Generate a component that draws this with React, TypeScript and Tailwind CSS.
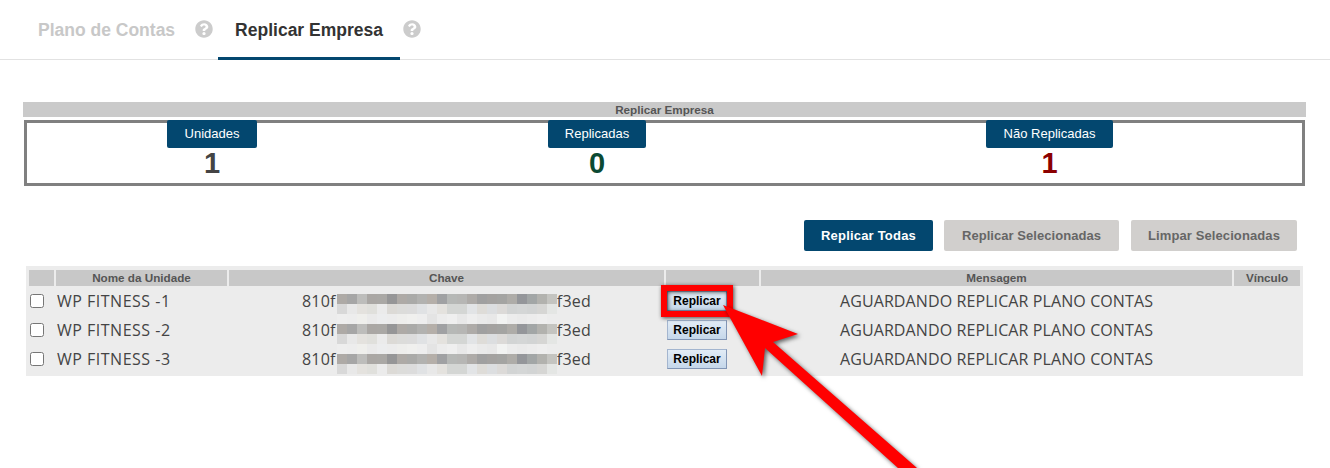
import { FaQuestionCircle } from 'react-icons/fa';

const dark = ['#aeaaa6', '#a6a6a6', '#bdbdbb', '#aaa7a4', '#aaa8a5', '#969697', '#aeaaa6', '#aaaaa8', '#b2b2b0', '#b5afa9', '#a0a1a3', '#b6b8b6', '#b6b6b4', '#aeaba8', '#a0a0a0', '#a4a2a0', '#a4a4a2', '#aeaca8', '#94969a', '#a2a6a6', '#b2b2ae', '#c4c4c0'];
const mid = ['#d8d8d8', '#e8e8e8', '#e4e2de', '#e0e0dc', '#ebebeb', '#dcdad6', '#dcdcda', '#dcdcdc', '#e0e2e4', '#e8e8e8', '#e4e2de', '#d4d6d4', '#d4d6d4', '#e2e4e6', '#dedcd8', '#dcdee0', '#dcdad8', '#d2d4d4', '#d4d6d6', '#d2d4d4', '#d6d6d4', '#e4e6e4'];
const pale = ['#eeeeee', '#ededed', '#efefec', '#eaeaea', '#ecedee', '#ececec', '#eeeeec', '#f0f0ee', '#eeeeee', '#e4e4e4', '#ececec', '#efefef', '#e8e8e8', '#eeeeee', '#eaeaea', '#e8e8e8', '#f2f3f2', '#ececec', '#eaeaea', '#ececec', '#eeeeee', '#ececec'];
const mosaic = [dark, mid, pale, dark, mid, pale, dark, mid];

const stats = [
  { label: 'Unidades', value: '1', color: 'text-[#444444]' },
  { label: 'Replicadas', value: '0', color: 'text-[#0b4a33]' },
  { label: 'Não Replicadas', value: '1', color: 'text-[#8b0000]' },
];

const rows = ['WP FITNESS -1', 'WP FITNESS -2', 'WP FITNESS -3'];
const cols = 'grid grid-cols-[25px_171px_435px_93px_471px_66px] gap-x-[2px]';

export default function App() {
  return (
    <div className="relative h-[468px] w-[1330px] overflow-hidden bg-white font-['Liberation_Sans',Arial,sans-serif]">
      <div className="flex h-[60px] border-b border-[#e2e2e2] pl-[21px]">
        <div className="flex h-[60px] items-center px-[17px] text-[17.5px] font-bold text-[#c8c8c8]">Plano de Contas</div>
        <FaQuestionCircle size={18} className="ml-[3px] mr-[5px] mt-[20px] text-[#cccccc]" />
        <div className="flex h-[60px] items-center border-b-[3px] border-[#03476f] px-[17px] pt-[3px] text-[17.5px] font-bold text-[#333333]">Replicar Empresa</div>
        <FaQuestionCircle size={18} className="ml-[3px] mt-[20px] text-[#cccccc]" />
      </div>

      <div className="ml-[23px] mt-[42px] w-[1283px]">
        <div className="h-[15px] bg-[#cacaca] text-center text-[11.7px] font-bold leading-[16px] text-[#555555]">Replicar Empresa</div>
        <div className="ml-px mt-[3px] grid h-[66px] w-[1281px] grid-cols-[370px_400px_1fr] border-[3px] border-[#808080]">
          {stats.map((s) => (
            <div key={s.label} className="-mt-[3px] flex flex-col items-center">
              <div className="flex h-[28px] items-center rounded-[2px] bg-[#03476f] px-[17.25px] text-[13px] text-white">{s.label}</div>
              <div className={`text-[29px] font-bold leading-[30px] ${s.color}`}>{s.value}</div>
            </div>
          ))}
        </div>
      </div>

      <div className="mr-[33px] mt-[34px] flex h-[31px] justify-end text-[13px] font-bold">
        <div className="mr-[11px] flex w-[129px] items-center justify-center rounded-[2px] bg-[#03476f] tracking-[0.2px] text-white">Replicar Todas</div>
        <div className="mr-[12px] flex w-[175px] items-center justify-center rounded-[2px] bg-[#d1cfcd] tracking-[0.05px] text-[#666666]">Replicar Selecionadas</div>
        <div className="flex w-[166px] items-center justify-center rounded-[2px] bg-[#d1cfcd] tracking-[0.1px] text-[#666666]">Limpar Selecionadas</div>
      </div>

      <div className="relative ml-[26px] mt-[15px] h-[110px] w-[1277px] bg-[#ececec] pl-[3px] pt-[4px]">
        <div className={`${cols} h-[15px] text-center text-[11.7px] font-bold leading-[16px] text-[#555555]`}>
          <div className="bg-[#c8c8c8]" />
          <div className="bg-[#c8c8c8]">Nome da Unidade</div>
          <div className="bg-[#c8c8c8]">Chave</div>
          <div className="bg-[#c8c8c8]" />
          <div className="bg-[#c8c8c8]">Mensagem</div>
          <div className="bg-[#c8c8c8]">Vínculo</div>
        </div>
        <div className="mt-px font-['Open_Sans',sans-serif] text-[16px] text-[#444444]">
          {rows.map((name) => (
            <div key={name} className={`${cols} h-[29.33px] items-center`}>
              <div className="flex pl-px">
                <input type="checkbox" readOnly className="m-0 h-[14px] w-[14px]" />
              </div>
              <div className="pl-px tracking-[0.5px]">{name}</div>
              <div className="flex justify-center tracking-[0.25px]">
                <span>810f</span>
                <span className="w-[221px]" />
                <span>f3ed</span>
              </div>
              <div className="flex">
                <div className="ml-px flex h-[20px] w-[60px] items-center justify-center border border-[#a3b5cf] border-b-[#8195b5] border-r-[#8195b5] bg-gradient-to-b from-[#e2ecf6] to-[#c5d7ea] font-['Liberation_Sans',Arial,sans-serif] text-[12px] font-bold text-black">
                  Replicar
                </div>
              </div>
              <div className="text-center tracking-[0.1px]">AGUARDANDO REPLICAR PLANO CONTAS</div>
              <div />
            </div>
          ))}
        </div>
        <svg className="absolute left-[311px] top-[28px]" width="220" height="80" viewBox="0 0 220 80" shapeRendering="crispEdges">
          {mosaic.map((line, y) =>
            line.map((fill, x) => <rect key={`${x}-${y}`} x={x * 10} y={y * 10} width="10" height="10" fill={fill} />)
          )}
        </svg>
      </div>

      <div className="absolute left-[661px] top-[285px] h-[32px] w-[72px] border-[6px] border-[#ff0000] drop-shadow-[1px_1px_2px_rgba(0,0,0,0.7)]" />
      <svg className="absolute left-0 top-0 drop-shadow-[2px_2px_2px_rgba(0,0,0,0.6)]" width="1330" height="468" viewBox="0 0 1330 468">
        <polygon points="723,305 798,334 773,342 917,468 898,468 765,348 762,376" fill="#ff0000" />
      </svg>
    </div>
  );
}
